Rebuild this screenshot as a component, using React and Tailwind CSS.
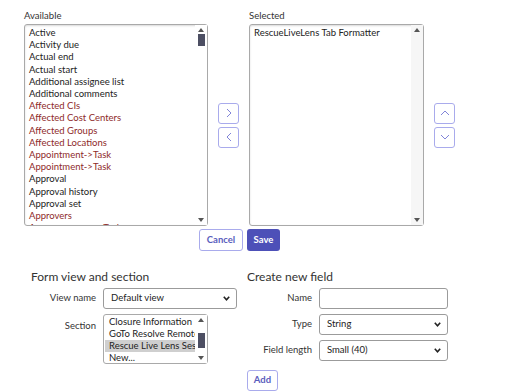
import React from "react";

const available = [
  ["Active", false],
  ["Activity due", false],
  ["Actual end", false],
  ["Actual start", false],
  ["Additional assignee list", false],
  ["Additional comments", false],
  ["Affected CIs", true],
  ["Affected Cost Centers", true],
  ["Affected Groups", true],
  ["Affected Locations", true],
  ["Appointment->Task", true],
  ["Appointment->Task", true],
  ["Approval", false],
  ["Approval history", false],
  ["Approval set", false],
  ["Approvers", true],
  ["Approver group->Task", true],
];

const sections = ["Closure Information", "GoTo Resolve Remote Session", "Rescue Live Lens Session", "New..."];

const Tri = ({ up }) => (
  <svg width="6" height="4" viewBox="0 0 6 4" className="shrink-0">
    <path d={up ? "M0 4 L3 0 L6 4 Z" : "M0 0 L3 4 L6 0 Z"} fill="#555" />
  </svg>
);

// fake scrollbar, drawn in flow at the right of a list box
const Scrollbar = ({ thumbTop, thumbH, track = "bg-white" }) => (
  <div className={"flex w-3 shrink-0 flex-col items-center py-[3px] " + track}>
    <Tri up />
    <div className="relative w-full flex-1">
      {thumbH ? (
        <div className="mx-auto w-[7px] bg-[#4d4f63]" style={{ marginTop: thumbTop, height: thumbH }} />
      ) : null}
    </div>
    <Tri />
  </div>
);

const Chevron = ({ dir }) => {
  const d = {
    right: "M5 3 L9 7 L5 11",
    left: "M9 3 L5 7 L9 11",
    up: "M3 9 L7 5 L11 9",
    down: "M3 5 L7 9 L11 5",
  }[dir];
  return (
    <svg width="14" height="14" viewBox="0 0 14 14">
      <path d={d} fill="none" stroke="#8184d8" strokeWidth="1" />
    </svg>
  );
};

const ArrowBtn = ({ dir }) => (
  <button className="flex h-[21px] w-[21px] items-center justify-center rounded-[3px] border border-[#a9abec] bg-white">
    <Chevron dir={dir} />
  </button>
);

const SelectBox = ({ value, w = "w-[134px]" }) => (
  <div className={"flex h-[21px] items-center justify-between rounded-[3px] border border-[#9b9b9b] bg-white pl-[7px] pr-[6px] " + w}>
    <span className="text-[9.5px] text-[#222]">{value}</span>
    <svg width="7" height="5" viewBox="0 0 7 5">
      <path d="M0.8 0.8 L3.5 3.8 L6.2 0.8" fill="none" stroke="#222" strokeWidth="1.6" />
    </svg>
  </div>
);

const Label = ({ children }) => (
  <div className="w-[65px] shrink-0 text-right text-[9.5px] text-[#333]">{children}</div>
);

export default function App() {
  return (
    <div className="h-[391px] w-[518px] overflow-hidden bg-white font-['Lato',sans-serif] text-[#222]">
      <div className="flex flex-col items-center pl-[24px] pr-[63px] pt-[10px]">
        <div className="flex w-full items-center gap-[10px]">
          <div className="flex flex-col">
            <div className="mb-[2px] text-[9.5px] leading-[12px] text-[#333]">Available</div>
            <div className="flex h-[202px] w-[184px] rounded-[3px] border border-[#a9a9a9] shadow-[inset_0_1px_2px_rgba(0,0,0,0.15)]">
              <div className="flex-1 overflow-hidden pl-[4px] pt-[2px]">
                {available.map(([t, red], i) => (
                  <div
                    key={i}
                    className={"whitespace-nowrap text-[9.5px] leading-[12.2px] " + (red ? "text-[#8e2a2a]" : "text-[#222]")}
                  >
                    {t}
                  </div>
                ))}
              </div>
              <Scrollbar thumbTop={2} thumbH={12} />
            </div>
          </div>
          <div className="mt-[14px] flex flex-col gap-[3px]">
            <ArrowBtn dir="right" />
            <ArrowBtn dir="left" />
          </div>
          <div className="flex flex-col">
            <div className="mb-[2px] text-[9.5px] leading-[12px] text-[#333]">Selected</div>
            <div className="flex h-[202px] w-[175px] rounded-[3px] border border-[#a9a9a9] shadow-[inset_0_1px_2px_rgba(0,0,0,0.15)]">
              <div className="flex-1 overflow-hidden pl-[4px] pt-[2px]">
                <div className="whitespace-nowrap text-[9.5px] leading-[12.2px] text-[#222]">RescueLiveLens Tab Formatter</div>
              </div>
              <Scrollbar track="bg-[#f6f6f6]" />
            </div>
          </div>
          <div className="mt-[14px] flex flex-col gap-[3px]">
            <ArrowBtn dir="up" />
            <ArrowBtn dir="down" />
          </div>
        </div>
        <div className="mt-[3px] flex gap-[4px]">
          <button className="h-[22px] w-[44px] rounded-[3px] border border-[#a9abec] bg-white text-[9.5px] font-bold text-[#5a5dbd]">
            Cancel
          </button>
          <button className="h-[22px] w-[33px] rounded-[3px] bg-[#4d50b8] text-[9.5px] font-bold text-white">Save</button>
        </div>
      </div>

      <div className="mt-[18px] flex pl-[31px]">
        <div className="flex w-[216px] flex-col">
          <div className="mb-[3px] text-[12px] leading-[16px] text-[#333]">Form view and section</div>
          <div className="flex items-center gap-[7px]">
            <Label>View name</Label>
            <SelectBox value="Default view" />
          </div>
          <div className="mt-[5px] flex items-start gap-[7px]">
            <div className="w-[65px] pt-[5px] text-right text-[9.5px] text-[#333]">Section</div>
            <div className="flex h-[50px] w-[105px] rounded-[3px] border border-[#a9a9a9]">
              <div className="flex-1 overflow-hidden pl-[1px] pt-[1px]">
                {sections.map((s, i) => (
                  <div
                    key={i}
                    className={"whitespace-nowrap pl-[4px] text-[9.5px] leading-[12px] text-[#222] " + (i === 2 ? "bg-[#cfcfcf]" : "")}
                  >
                    {s}
                  </div>
                ))}
              </div>
              <Scrollbar thumbTop={11} thumbH={15} />
            </div>
          </div>
        </div>
        <div className="flex flex-col">
          <div className="mb-[3px] text-[12px] leading-[16px] text-[#333]">Create new field</div>
          <div className="flex items-center gap-[7px]">
            <Label>Name</Label>
            <div className="h-[21px] w-[129px] rounded-[3px] border border-[#9b9b9b] bg-white" />
          </div>
          <div className="mt-[5px] flex items-center gap-[7px]">
            <Label>Type</Label>
            <SelectBox value="String" w="w-[129px]" />
          </div>
          <div className="mt-[5px] flex items-center gap-[7px]">
            <Label>Field length</Label>
            <SelectBox value="Small (40)" w="w-[129px]" />
          </div>
          <div className="mt-[4px]">
            <button className="h-[21px] w-[31px] rounded-[3px] border border-[#a9abec] bg-white text-[9.5px] font-bold text-[#5a5dbd]">
              Add
            </button>
          </div>
        </div>
      </div>
    </div>
  );
}
